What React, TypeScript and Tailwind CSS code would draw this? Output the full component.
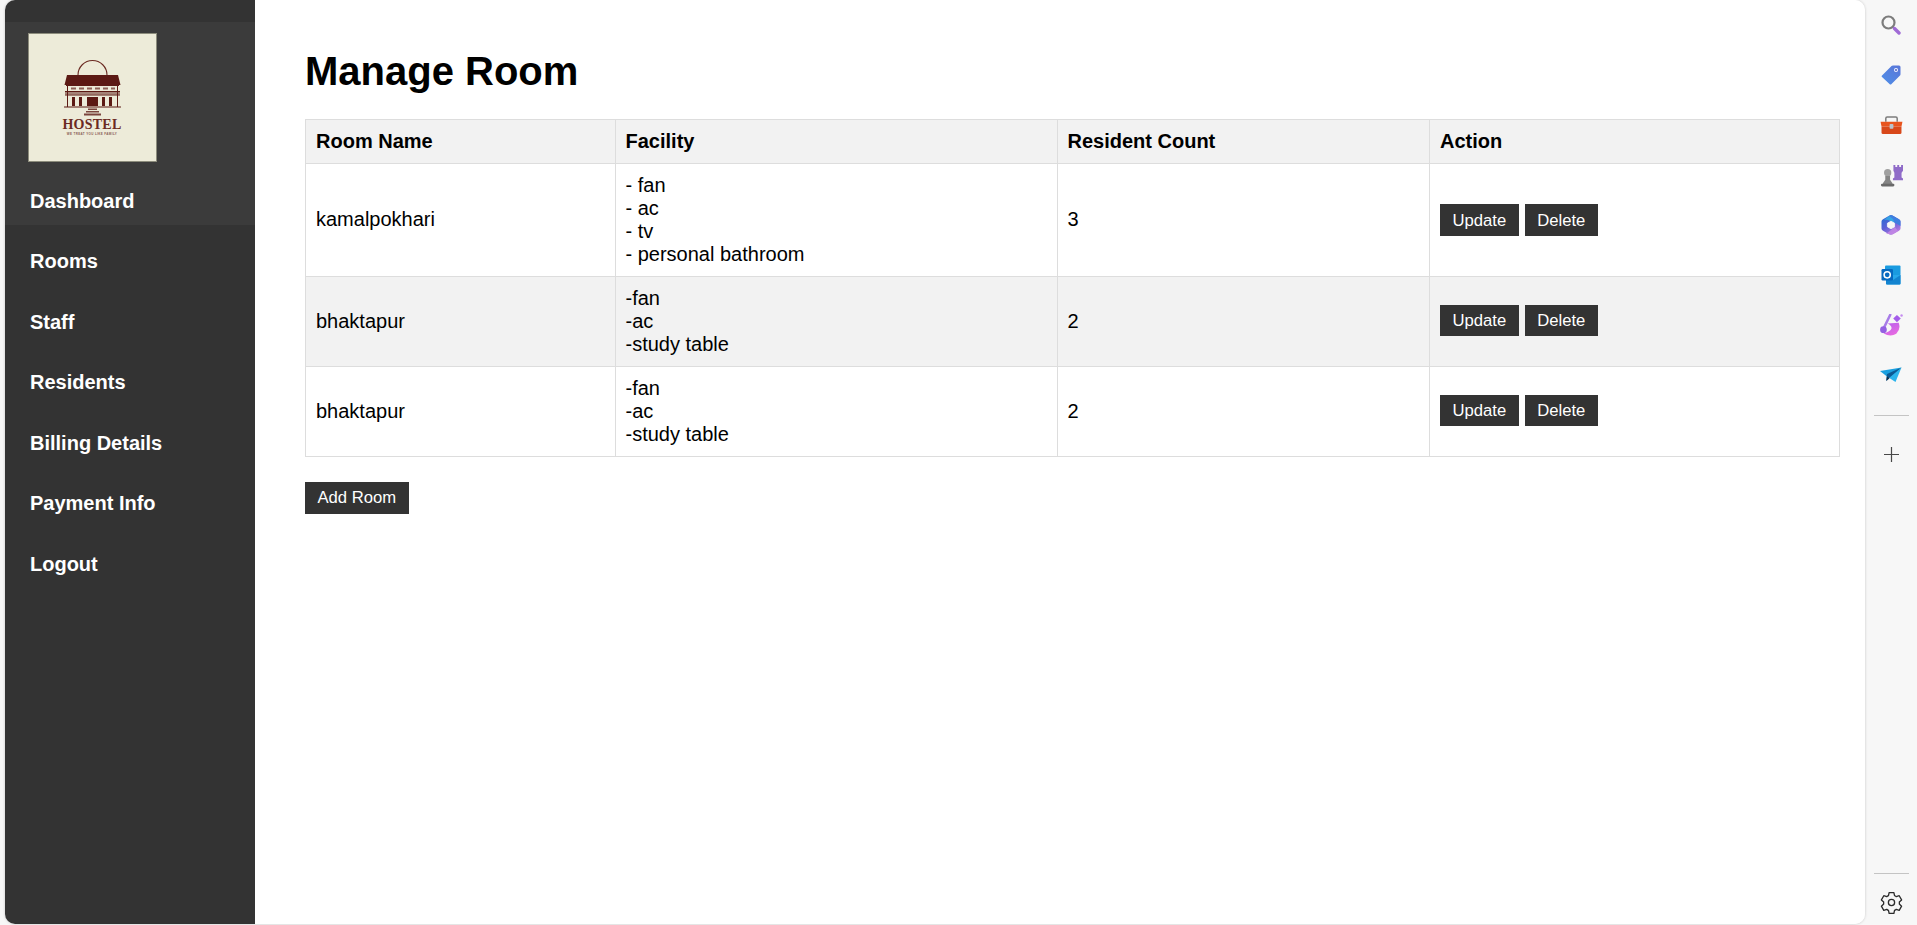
const navItems = ["Rooms", "Staff", "Residents", "Billing Details", "Payment Info", "Logout"];

const rooms = [
  { name: "kamalpokhari", facility: ["- fan", "- ac", "- tv", "- personal bathroom"], count: 3, cell: "pt-[9px] pb-[11px]", actionCell: "py-[10px]" },
  { name: "bhaktapur", facility: ["-fan", "-ac", "-study table"], count: 2, cell: "py-[10px]", actionCell: "pt-[9px] pb-[11px]" },
  { name: "bhaktapur", facility: ["-fan", "-ac", "-study table"], count: 2, cell: "py-[10px]", actionCell: "pt-[9px] pb-[11px]" },
];

const HostelLogo = () => (
  <svg viewBox="0 0 129 129" className="w-[129px] h-[129px] block">
    <rect x="0.5" y="0.5" width="128" height="128" fill="#edebd9" stroke="#8c8c7c" />
    <g fill="#5c1a14" stroke="none">
      <path d="M50 42 A14.5 14.5 0 0 1 79 42" fill="none" stroke="#6b2a22" strokeWidth="1.1" />
      <path d="M39 42 H90 L92.5 52 H36.5 Z" />
      <rect x="38" y="52" width="53" height="1" />
      <rect x="39" y="53" width="1" height="21" />
      <rect x="89" y="53" width="1" height="21" />
      <rect x="43" y="54.5" width="5" height="2" opacity="0.65" />
      <rect x="51" y="54.5" width="5" height="2" opacity="0.65" />
      <rect x="59" y="54.5" width="5" height="2" opacity="0.65" />
      <rect x="67" y="54.5" width="5" height="2" opacity="0.65" />
      <rect x="75" y="54.5" width="5" height="2" opacity="0.65" />
      <rect x="83" y="54.5" width="4" height="2" opacity="0.65" />
      <rect x="37" y="58" width="55" height="1" />
      <rect x="37" y="59" width="55" height="2.5" opacity="0.5" />
      <rect x="37" y="61.5" width="55" height="1" />
      <rect x="44" y="64" width="3" height="9" />
      <rect x="51" y="64" width="3" height="9" />
      <rect x="59" y="64" width="11" height="9" />
      <rect x="74" y="64" width="3" height="9" />
      <rect x="81" y="64" width="3" height="9" />
      <rect x="36" y="73.5" width="57" height="1" />
      <rect x="60" y="75.5" width="9" height="1.5" opacity="0.8" />
      <rect x="58" y="78" width="13" height="1.5" opacity="0.8" />
      <rect x="56" y="80.5" width="17" height="2" opacity="0.8" />
    </g>
    <text x="64" y="96" textAnchor="middle" fill="#6b2a22" fontFamily="Liberation Serif, serif" fontWeight="700" fontSize="14" letterSpacing="0.25">
      HOSTEL
    </text>
    <text x="64" y="101.5" textAnchor="middle" fill="#8a5c54" fontFamily="Liberation Sans, sans-serif" fontWeight="700" fontSize="3" letterSpacing="0.35">
      WE TREAT YOU LIKE FAMILY
    </text>
  </svg>
);

const SearchIcon = () => (
  <svg viewBox="0 0 20 20" className="w-5 h-5">
    <circle cx="7.5" cy="7.5" r="6" fill="none" stroke="#7c7c7c" strokeWidth="2.2" />
    <path d="M12 12 L13.5 13.5" stroke="#7c7c7c" strokeWidth="2" />
    <path d="M13.5 13.5 L18 18" stroke="#a06bd6" strokeWidth="3.4" strokeLinecap="round" />
  </svg>
);

const TagIcon = () => (
  <svg viewBox="0 0 20 20" className="w-5 h-5">
    <defs>
      <linearGradient id="tag" x1="0" y1="1" x2="1" y2="0">
        <stop offset="0" stopColor="#4f8fe8" />
        <stop offset="1" stopColor="#5a76d8" />
      </linearGradient>
    </defs>
    <path d="M1 10.5 L10.5 1 Q11 0.5 12 0.5 H18 Q19.5 0.5 19.5 2 V9 Q19.5 10 19 10.5 L10.5 19 Q9.5 20 8.5 19 L1 12 Q0 11 1 10.5 Z" fill="url(#tag)" />
    <circle cx="15" cy="5" r="2" fill="#f4f4ff" />
    <circle cx="15" cy="5" r="1" fill="#4a5fc0" />
  </svg>
);

const ToolboxIcon = () => (
  <svg viewBox="0 0 24 20" className="w-[23px] h-[19px]">
    <path d="M6 6 V2.5 Q6 1 7.5 1 H16.5 Q18 1 18 2.5 V6" fill="none" stroke="#7d7d7d" strokeWidth="1.6" />
    <path d="M0.5 6 H23.5 L22.5 11 H1.5 Z" fill="#e8541e" />
    <path d="M1.5 11 H22.5 V17.5 Q22.5 19 21 19 H3 Q1.5 19 1.5 17.5 Z" fill="#d8481a" />
    <rect x="10" y="8.5" width="4" height="5" rx="0.8" fill="#b9c4cc" />
  </svg>
);

const ChessIcon = () => (
  <svg viewBox="0 0 24 24" className="w-[23px] h-[23px]">
    <path d="M14 1 H16 V3 H18 V1 H20 V3 H22 V1 H24 V7 L22.5 9 V14 L24 15 V17 H13.5 V15 L15 14 V9 L14 7 Z" fill="#8f6bc8" />
    <circle cx="8" cy="9" r="3.8" fill="#a0a0a0" />
    <path d="M5.5 12.5 H10.5 L10.5 16.5 L13 20 V21 H3 V20 L5.5 16.5 Z" fill="#858585" />
    <rect x="1" y="20.5" width="14" height="3" rx="1.2" fill="#6a6a6a" />
  </svg>
);

const M365Icon = () => (
  <svg viewBox="0 0 20 22" className="w-5 h-[22px]">
    <defs>
      <linearGradient id="m365" x1="0" y1="0" x2="0.6" y2="1">
        <stop offset="0" stopColor="#1c6fd4" />
        <stop offset="0.55" stopColor="#5b5fd6" />
        <stop offset="1" stopColor="#b77be0" />
      </linearGradient>
    </defs>
    <path d="M10 1 Q10.6 1 11.5 1.6 L18 5.2 Q19.5 6 19.5 7.5 V14.5 Q19.5 16 18 16.8 L11.5 20.4 Q10 21.3 8.5 20.4 L2 16.8 Q0.5 16 0.5 14.5 V7.5 Q0.5 6 2 5.2 L8.5 1.6 Q9.4 1 10 1 Z" fill="url(#m365)" />
    <path d="M8.5 1.6 Q10 0.7 11.5 1.6 L18 5.2 Q19.5 6 19.5 7.5 V12 L14.5 9 Q12 7 9 7 Z" fill="#3f7fe0" />
    <path d="M8 1.9 L3 6 Q6 5 9 7 L14 9.5 L12 5 Z" fill="#34b0e6" opacity="0.8" />
    <path d="M5 20 L12 20 L17 17 L14 13 L10 16 Z" fill="#c58ae6" opacity="0.8" />
    <path d="M10 7.2 L13.6 9.2 V12.8 L10 14.8 L6.4 12.8 V9.2 Z" fill="#f7f7f7" stroke="#f7f7f7" strokeWidth="0.8" strokeLinejoin="round" />
  </svg>
);

const OutlookIcon = () => (
  <svg viewBox="0 0 20 20" className="w-5 h-5">
    <rect x="4" y="0.5" width="15.5" height="10" rx="1" fill="#1a9be0" />
    <path d="M5 10 H19.5 V18.5 Q19.5 19.5 18.5 19.5 H6 Q5 19.5 5 18.5 Z" fill="#28a8ea" />
    <path d="M19.5 10 L12 15 L5 10 V18.5 Q5 19.5 6 19.5 H18.5 Q19.5 19.5 19.5 18.5 Z" fill="#1384d0" />
    <rect x="0.5" y="4" width="11.5" height="11.5" rx="1.2" fill="#0669c0" />
    <circle cx="6.2" cy="9.8" r="3.1" fill="none" stroke="#ffffff" strokeWidth="1.5" />
  </svg>
);

const DesignerIcon = () => (
  <svg viewBox="0 0 24 24" className="w-[23px] h-[23px]">
    <defs>
      <linearGradient id="designer" x1="0.2" y1="0" x2="0.8" y2="1">
        <stop offset="0" stopColor="#b860ec" />
        <stop offset="1" stopColor="#ec6ce0" />
      </linearGradient>
    </defs>
    <path d="M8 10 L19.5 9 Q22 16 17 20.5 Q11 24.5 3.5 20 Q11 18.5 12 15 Q12.5 12.5 8 10 Z" fill="url(#designer)" />
    <path d="M10.7 0.7 L3.3 16" stroke="#a87ce8" strokeWidth="2.6" strokeLinecap="round" />
    <circle cx="3.6" cy="16.4" r="3.5" fill="#9460e2" />
    <path d="M17.7 1 L21.7 4.7 L17.7 8.5 L13.8 4.7 Z" fill="#a45cea" />
    <circle cx="22.5" cy="1.5" r="1.3" fill="#c58cf0" />
  </svg>
);

const SendIcon = () => (
  <svg viewBox="0 0 22 16" className="w-[22px] h-4">
    <path d="M0 4 L21.5 0.5 L7 9.5 Z" fill="#1aa0e0" />
    <path d="M21.5 0.5 L15.5 15 L7 9.5 Z" fill="#2cb4ec" />
    <path d="M21.5 0.5 L7 7 L6 14 L9 11 Z" fill="#0c5a94" />
    <path d="M7 9.5 L6.5 14 L9.5 11.2 Z" fill="#12324e" />
  </svg>
);

const PlusIcon = () => (
  <svg viewBox="0 0 15 15" className="w-[15px] h-[15px]">
    <path d="M7.5 0 V15 M0 7.5 H15" stroke="#484848" strokeWidth="1.2" />
  </svg>
);

const GearIcon = () => (
  <svg viewBox="0 0 24 24" className="w-[25px] h-[25px]" fill="none" stroke="#2b2b2b" strokeWidth="1.25" strokeLinejoin="round">
    <path d="M9.7 2.5 h4.6 l.6 2.9 c.6.2 1.2.6 1.7 1 l2.8-.9 2.3 4-2.2 2c.1.6.1 1.3 0 2 l2.2 2-2.3 4-2.8-.9c-.5.4-1.1.7-1.7 1 l-.6 2.9 h-4.6 l-.6-2.9 c-.6-.2-1.2-.6-1.7-1 l-2.8.9-2.3-4 2.2-2c-.1-.6-.1-1.3 0-2 l-2.2-2 2.3-4 2.8.9c.5-.4 1.1-.7 1.7-1 z" />
    <circle cx="12" cy="12" r="3" />
  </svg>
);

const ActionButton = ({ label, className = "" }: { label: string; className?: string }) => (
  <button className={`bg-[#333333] text-white text-[16.67px] leading-[19px] px-[12.5px] py-[6.25px] ${className}`}>
    {label}
  </button>
);

const Sidebar = () => (
  <aside className="w-[250px] shrink-0 bg-[#333333] pt-[22px] text-white">
    <div className="bg-[#3b3b3b] h-[203px] pt-[11px] pl-[23px]">
      <HostelLogo />
      <div className="mt-[28px] ml-[2px] text-[20px] leading-[23px] font-bold">Dashboard</div>
    </div>
    <ul className="mt-[12.5px] flex flex-col gap-[12.5px]">
      {navItems.map((item) => (
        <li key={item} className="pl-[25px] py-[12.5px] text-[20px] leading-[23px] font-bold">
          {item}
        </li>
      ))}
    </ul>
  </aside>
);

const RoomTable = () => (
  <table className="w-[1535px] table-fixed border-collapse text-[20px] leading-[23px]">
    <thead>
      <tr className="bg-[#f2f2f2]">
        <th className="w-[309.5px] border border-[#dddddd] p-[10px] text-left font-bold">Room Name</th>
        <th className="w-[442px] border border-[#dddddd] p-[10px] text-left font-bold">Facility</th>
        <th className="w-[372.5px] border border-[#dddddd] p-[10px] text-left font-bold">Resident Count</th>
        <th className="border border-[#dddddd] p-[10px] text-left font-bold">Action</th>
      </tr>
    </thead>
    <tbody>
      {rooms.map((room, index) => (
        <tr key={index} className={index === 1 ? "bg-[#f2f2f2]" : "bg-white"}>
          <td className={`border border-[#dddddd] px-[10px] ${room.cell}`}>{room.name}</td>
          <td className="border border-[#dddddd] p-[10px]">
            {room.facility.map((line) => (
              <div key={line}>{line}</div>
            ))}
          </td>
          <td className={`border border-[#dddddd] px-[10px] ${room.cell}`}>{room.count}</td>
          <td className={`border border-[#dddddd] px-[10px] ${room.actionCell}`}>
            <div className="flex gap-[6px]">
              <ActionButton label="Update" />
              <ActionButton label="Delete" />
            </div>
          </td>
        </tr>
      ))}
    </tbody>
  </table>
);

const EdgeBar = () => (
  <div className="w-[52px] shrink-0 flex flex-col items-center">
    {[SearchIcon, TagIcon, ToolboxIcon, ChessIcon, M365Icon, OutlookIcon, DesignerIcon, SendIcon].map((Icon, i) => (
      <div key={i} className="h-[50px] w-full flex items-center justify-center">
        <Icon />
      </div>
    ))}
    <div className="w-[35px] h-px bg-[#c4c4c4] mt-[15px]" />
    <div className="h-[78px] pb-[2px] flex items-center justify-center">
      <PlusIcon />
    </div>
    <div className="w-[35px] h-px bg-[#c4c4c4] mt-auto" />
    <div className="h-[51px] pt-[6px] flex items-center justify-center">
      <GearIcon />
    </div>
  </div>
);

export default function App() {
  return (
    <div className="h-[925px] w-[1917px] overflow-hidden flex bg-[#f7f7f7] pl-[5px] text-black font-['Liberation_Sans',Arial,sans-serif]">
      <div className="flex-1 flex rounded-[10px] overflow-hidden mb-px shadow-[0_0_3px_rgba(0,0,0,0.2)]">
        <Sidebar />
        <main className="flex-1 bg-white pl-[50px] pt-[48px]">
          <h1 className="text-[40px] leading-[46px] font-bold mb-[25px]">Manage Room</h1>
          <RoomTable />
          <ActionButton label="Add Room" className="mt-[25px]" />
        </main>
      </div>
      <EdgeBar />
    </div>
  );
}
